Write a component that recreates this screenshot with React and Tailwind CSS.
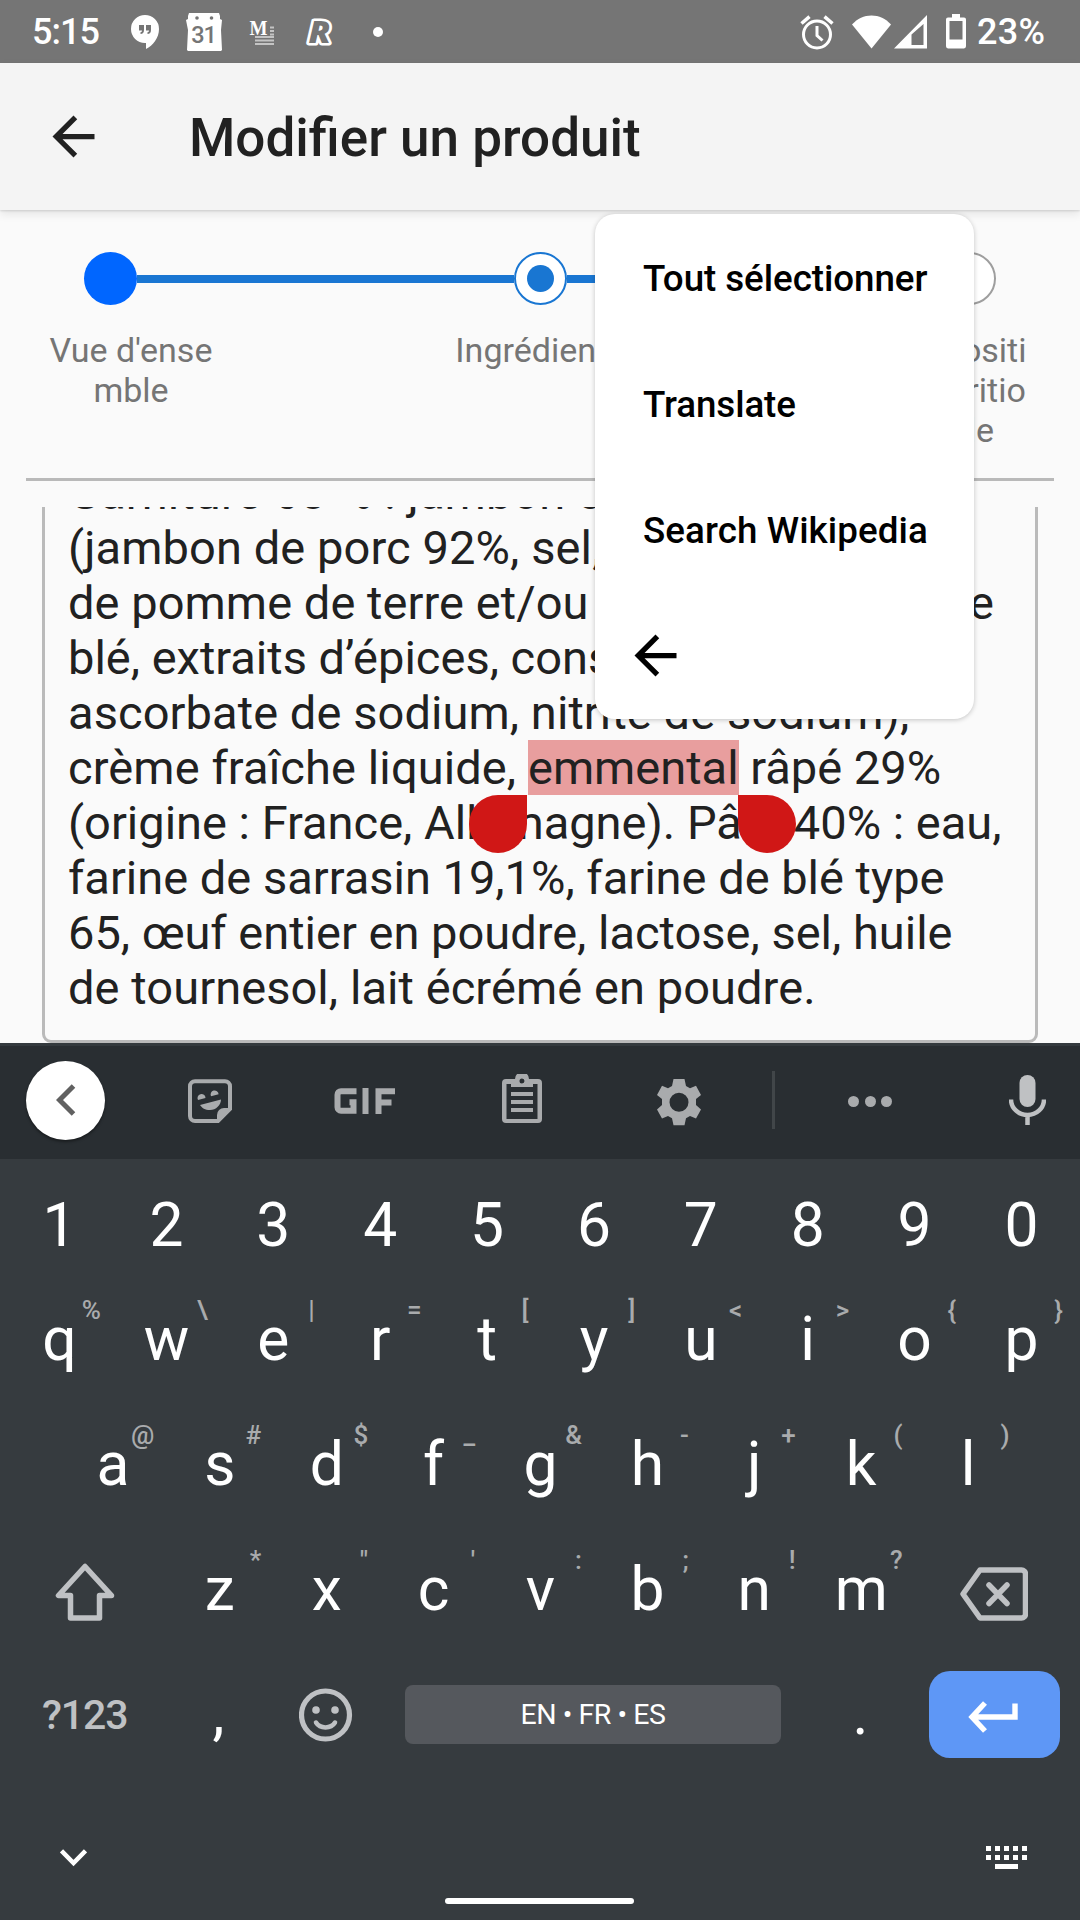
const roboto = "font-['Roboto','Noto_Sans',sans-serif]";

function BackArrow({ className }) {
  return (
    <svg viewBox="0 0 24 24" className={className} fill="currentColor">
      <path d="M20 11H7.83l5.59-5.59L12 4l-8 8 8 8 1.41-1.41L7.83 13H20v-2z" />
    </svg>
  );
}

function StatusBar() {
  return (
    <header className="flex h-[63px] items-center bg-[#757575] text-white">
      <span className="ml-[32px] w-[99px] text-[36px] font-medium tracking-[-1px] leading-[64px]">5:15</span>
      <svg className="h-[36px] w-[28px]" viewBox="0 0 28 36">
        <path fill="#fff" d="M14 1a14 14 0 0 0 0 28h1v6c7-3.500 13-11 13-20A14 14 0 0 0 14 1z" />
        <path fill="#757575" d="M8 11h5v5c0 2.500-1.200 4-3.500 4v-1.800c1 0 1.500-.8 1.500-1.700H8zM15 11h5v5c0 2.500-1.200 4-3.500 4v-1.800c1 0 1.500-.8 1.500-1.700h-3z" />
      </svg>
      <svg className="ml-[27px] h-[38px] w-[36px] overflow-visible" viewBox="0 0 36 38">
        <path fill="#fff" d="M3 0h30l1 3v3l2 1-1 10 1 20-1 1H2l-1-1 1-20L0 7l2-1V3z" />
        <circle cx="11" cy="5" r="1.800" fill="#757575" />
        <circle cx="25.500" cy="5" r="1.800" fill="#757575" />
        <text x="17.500" y="30" textAnchor="middle" fontFamily="Roboto" fontWeight="500" fontSize="23.500" fill="#757575" letterSpacing="-1">31</text>
      </svg>
      <svg className="ml-[28px] h-[26px] w-[25px] overflow-visible" viewBox="0 0 25 26">
        <text x="-0.500" y="15.500" fontFamily="Liberation Serif" fontWeight="700" fontSize="22" textLength="18" lengthAdjust="spacingAndGlyphs" fill="#fff">M</text>
        <path stroke="#c4c4c4" strokeWidth="2" d="M20 8.500h4M20 12h4M20 15.500h4M5 18h19M5 21.500h19M5 25h19" />
      </svg>
      <svg className="ml-[30px] h-[34px] w-[30px] overflow-visible" viewBox="0 0 30 34">
        <text x="3.500" y="28" fontFamily="Open Sans" fontWeight="800" fontStyle="italic" fontSize="30" textLength="22" lengthAdjust="spacingAndGlyphs" fill="#757575" stroke="#fff" strokeWidth="5" strokeLinejoin="round" paintOrder="stroke">R</text>
      </svg>
      <span className="ml-[38px] size-[10px] rounded-full bg-white" />
      <div className="ml-auto mr-[32px] flex items-center">
        <svg className="h-[36px] w-[34px]" viewBox="0 0 34 36" fill="none" stroke="#fff">
          <circle cx="17" cy="20.500" r="13.500" strokeWidth="3" />
          <path d="M17 12v9.500l5.500 5" strokeWidth="3" />
          <path d="M1.500 9.500l8-6.800M32.500 9.500l-8-6.800" strokeWidth="3.500" />
        </svg>
        <svg className="ml-[18px] h-[34px] w-[39px]" viewBox="0 0 39 34">
          <path fill="#fff" d="M0 9.500C5.500 3.500 12 .5 19.500.5S33.500 3.500 39 9.500L19.500 33.500z" />
        </svg>
        <svg className="ml-[3px] h-[34px] w-[33px]" viewBox="0 0 33 34">
          <path fill="#fff" fillRule="evenodd" d="M33 0v33.500H0zM29.500 9L17.500 19.500V30h12z" />
        </svg>
        <svg className="ml-[19px] h-[35px] w-[20px]" viewBox="0 0 20 35">
          <path fill="#fff" fillRule="evenodd" d="M6 0h8v3.500h4a2 2 0 0 1 2 2V32a2.500 2.500 0 0 1-2 2.500H2A2.500 2.500 0 0 1 0 32V5.500a2 2 0 0 1 2-2h4zM3.500 7v18.500h13V7z" />
        </svg>
        <span className="ml-[11px] w-[71px] text-[36px] font-medium tracking-[0.3px] leading-[64px]">23%</span>
      </div>
    </header>
  );
}

function AppBar() {
  return (
    <div className="relative z-10 flex h-[147px] items-center bg-[#f4f4f4] pl-[42px] shadow-[0_1px_2px_rgba(0,0,0,0.12),0_4px_9px_rgba(0,0,0,0.09)]">
      <BackArrow className="size-[63px] text-[#212121]" />
      <h1 className="ml-[84px] pt-[3px] text-[53px] font-medium leading-[62px] text-[#212121]">Modifier un produit</h1>
    </div>
  );
}

function Stepper() {
  return (
    <section className="h-[268px] pt-[42px]">
      <div className="flex items-center px-[84px]">
        <span className="size-[53px] rounded-full bg-[#0066ff]" />
        <span className="mt-px h-[8px] flex-1 bg-[#1976d2]" />
        <span className="flex size-[53px] items-center justify-center rounded-full border-2 border-[#1976d2] bg-white">
          <span className="size-[27px] rounded-full bg-[#1976d2]" />
        </span>
        <span className="mt-px h-[8px] flex-1 bg-[#1976d2]" />
        <span className="size-[53px] rounded-full border-2 border-[#9e9e9e] bg-white" />
      </div>
      <div className="mt-[25px] flex justify-between px-[41px] text-center text-[34px] leading-[40px] text-[#757575]">
        <p className="w-[180px]">Vue d'ense<br />mble</p>
        <p className="w-[180px]">Ingrédients</p>
        <p className="w-[180px]">Compositi<br />on nutritio<br />nnelle</p>
      </div>
    </section>
  );
}

function IngredientsField() {
  return (
    <section className="h-[536px] overflow-hidden px-[42px]">
      <div className="-mt-[60px] h-[596px] rounded-[9px] border-[3px] border-[#bababa] pl-[23px] pt-[15px] text-[47px] leading-[55px] whitespace-nowrap text-[#212121]">
        <p className="tracking-[0.1px]">Garniture 60 % : jambon cuit</p>
        <p className="tracking-[0.1px]">(jambon de porc 92%, sel,</p>
        <p className="flex w-[926px] justify-between"><span className="tracking-[0.06px]">de pomme de terre et/ou</span><span>de</span></p>
        <p>blé, extraits d’épices, conservateurs :</p>
        <p className="tracking-[0.08px]">ascorbate de sodium, nitrite de sodium),</p>
        <p>
          <span className="tracking-[0.1px]">crème fraîche liquide, </span>
          <span className="relative inline-block h-[55px] bg-[#e89e9e] align-top">
            emmental
            <span className="absolute right-full top-full mr-[1px] size-[58px] rounded-full rounded-tr-none bg-[#d01716]" />
            <span className="absolute left-full top-full -ml-[1px] size-[58px] rounded-full rounded-tl-none bg-[#d01716]" />
          </span>{" "}
          râpé 29%
        </p>
        <p>(origine : France, Allemagne). Pâte 40% : eau,</p>
        <p>farine de sarrasin 19,1%, farine de blé type</p>
        <p>65, œuf entier en poudre, lactose, sel, huile</p>
        <p className="tracking-[0.07px]">de tournesol, lait écrémé en poudre.</p>
      </div>
    </section>
  );
}

function SelectionMenu() {
  return (
    <div className="absolute left-[595px] top-[214px] z-20 h-[505px] w-[379px] rounded-[20px] bg-white text-[36.75px] font-medium text-black shadow-[0_1px_5px_rgba(0,0,0,0.22)]">
      <p className="flex h-[126px] items-center pl-[48px] pt-[3px] tracking-[-0.06px]">Tout sélectionner</p>
      <p className="flex h-[126px] items-center pl-[48px] pt-[3px] tracking-[-0.1px]">Translate</p>
      <p className="flex h-[126px] items-center pl-[48px] pt-[3px] tracking-[0.08px]">Search Wikipedia</p>
      <div className="flex h-[126px] items-center pl-[29px]">
        <BackArrow className="size-[63px]" />
      </div>
    </div>
  );
}

function Toolbar() {
  return (
    <div className="flex h-[116px] items-center border-t-[3px] border-[#343a3e] bg-[#292e32] text-[#a9abad]">
      <span className="mb-[5px] ml-[26px] flex size-[79px] items-center justify-center rounded-full bg-white shadow-[0_2px_3px_rgba(0,0,0,0.4)]">
        <svg className="h-[32px] w-[20px]" viewBox="0 0 20 32" fill="none" stroke="#616161" strokeWidth="5"><path d="M17.500 2L3.500 16l14 14" /></svg>
      </span>
      <svg className="mb-[4px] ml-[83px] size-[44px]" viewBox="0 0 44 44" fill="none">
        <path d="M7 2.200h30a5 5 0 0 1 5 5V30L30 42H7a5 5 0 0 1-5-5V7.200a5 5 0 0 1 5-5z" stroke="currentColor" strokeWidth="4" />
        <path d="M43.500 29L29 43.500V36a7 7 0 0 1 7-7z" fill="currentColor" />
        <path d="M12 26l21-5.500C33 26 28 31 22 31c-5 0-8-2-10-5zM10 21a4 4 0 1 1 7.500-2zM23 17.200a4 4 0 1 1 7.600-2z" fill="currentColor" />
      </svg>
      <svg className="mb-[3px] ml-[102px] h-[26px] w-[62px]" viewBox="0 0 62 26" fill="none" stroke="currentColor" strokeWidth="6">
        <path d="M22.500 3.200H7a3.500 3.500 0 0 0-3.500 3.500v12.500A3.500 3.500 0 0 0 7 22.700h12.500v-8.500h-4M31.500 0v26M44.500 26V3.200H61M44.500 14.500h13" />
      </svg>
      <svg className="mb-[7px] ml-[106px] h-[50px] w-[40px]" viewBox="0 0 40 50">
        <path fill="currentColor" fillRule="evenodd" d="M4 5h9a7 7 0 0 1 14 0h9a4 4 0 0 1 4 4v36a4 4 0 0 1-4 4H4a4 4 0 0 1-4-4V9a4 4 0 0 1 4-4zm.5 5v35h31V10H31v3H9v-3zM20 4.500a2.500 2.500 0 1 0 0 5 2.500 2.500 0 0 0 0-5zM9 18h22v4H9zm0 8h22v4H9zm0 8h22v4H9z" />
      </svg>
      <svg className="ml-[115px] h-[47px] w-[44px]" viewBox="0 0 44 47">
        <path fill="currentColor" fillRule="evenodd" d="M16.500 0h11l1.500 7 4 2.300 6-2.500L44 16l-5 4v6l5 4.500-5 9-6-2.500-4 2.300-1.500 7h-11l-1.500-7-4-2.300-6 2.500-5-9 5-4.500v-6L0 16l5-9.200L11 9.300 15 7zM22 13.700a9.500 9.500 0 1 0 0 19 9.500 9.500 0 0 0 0-19z" />
      </svg>
      <span className="mb-[5px] ml-[71px] h-[58px] w-[3px] bg-[#414649]" />
      <span className="mb-[3px] ml-[73px] flex gap-[5.500px]">
        <i className="size-[11px] rounded-full bg-[#a9abad]" />
        <i className="size-[11px] rounded-full bg-[#a9abad]" />
        <i className="size-[11px] rounded-full bg-[#a9abad]" />
      </span>
      <svg className="mb-[5px] ml-[117px] h-[50px] w-[37px]" viewBox="0 0 37 50" fill="none">
        <rect x="10.500" width="16" height="32" rx="8" fill="#bfc1c3" />
        <path d="M2 24.500a16.500 15.500 0 0 0 33 0M18.500 40v10" stroke="#bfc1c3" strokeWidth="4.500" />
      </svg>
    </div>
  );
}

function Key({ label, hint }) {
  return (
    <div className="relative flex w-[106.9px] items-center justify-center pl-px pt-[2px]">
      {label}
      {hint && <span className="absolute right-[11.500px] top-[18px] text-[26px] font-medium leading-[30px] text-[#a9abad]">{hint}</span>}
    </div>
  );
}

function KeyRow({ keys, hints }) {
  return keys.split("").map((k, i) => <Key key={k} label={k} hint={hints[i]} />);
}

function Keyboard() {
  return (
    <section className="flex h-[877px] flex-col bg-[#363b3f] text-[60.5px] leading-none text-white">
      <Toolbar />
      <div className="flex h-[118px] justify-center pt-[15px]"><KeyRow keys="1234567890" hints="" /></div>
      <div className="flex h-[125px] justify-center"><KeyRow keys="qwertyuiop" hints="%\|=[]<>{}" /></div>
      <div className="flex h-[125px] justify-center"><KeyRow keys="asdfghjkl" hints="@#$_&-+()" /></div>
      <div className="flex h-[125px] justify-center">
        <div className="flex w-[165px] items-center pl-[54px]">
          <svg className="mt-[4px] h-[60px] w-[60px]" viewBox="0 0 60 60" fill="none" stroke="#bfc1c4" strokeWidth="5.500" strokeLinejoin="round">
            <path d="M30 4.500L3.500 33.500h12V56h29V33.500h12z" />
          </svg>
        </div>
        <KeyRow keys="zxcvbnm" hints={`*"':;!?`} />
        <div className="flex w-[165px] items-center pl-[46px]">
          <svg className="mt-[9px] h-[54px] w-[68px]" viewBox="0 0 68 54" fill="none" stroke="#bfc1c4" strokeWidth="5.500" strokeLinejoin="round" strokeLinecap="round">
            <path d="M20 3h41.500a4 4 0 0 1 4 4v40a4 4 0 0 1-4 4H20L3 27z" />
            <path d="M29 18l18 18.500M47 18L29 36.500" />
          </svg>
        </div>
      </div>
      <div className="flex h-[125px] items-center">
        <span className="w-[165px] pl-[42px] pt-[2px] text-[41px] font-medium tracking-[-1.100px] text-[#bfc1c4]">?123</span>
        <span className="w-[107px] text-center">,</span>
        <svg className="ml-[27px] size-[54px]" viewBox="0 0 54 54" fill="none" stroke="#bfc1c4" strokeWidth="5.200">
          <circle cx="26.500" cy="27" r="24" />
          <path d="M17 34.500c4 6.500 15 6.500 19 0" strokeWidth="4.500" strokeLinecap="round" />
          <circle cx="17" cy="22" r="3.800" fill="#bfc1c4" stroke="none" />
          <circle cx="36" cy="22" r="3.800" fill="#bfc1c4" stroke="none" />
        </svg>
        <span className="ml-[52px] flex h-[59px] w-[376px] items-center justify-center rounded-[8px] bg-[#55585d] pt-[2px] text-[28.500px] tracking-[-0.450px]">EN • FR • ES</span>
        <span className="ml-[26px] w-[107px] text-center">.</span>
        <span className="ml-[15px] flex h-[87px] w-[131px] items-center justify-center rounded-[21px] bg-[#5e97f6] pr-[3px]">
          <svg className="mt-[5px] h-[32px] w-[50px]" viewBox="0 0 50 32" fill="none" stroke="#fff" strokeWidth="5.400">
            <path d="M17 2L4 16l13 14M4 16h43V2.500" />
          </svg>
        </span>
      </div>
      <div className="flex flex-1 items-start justify-between pl-[60px] pr-[53px] pt-[69px]">
        <svg className="mt-[3px] h-[18px] w-[27px]" viewBox="0 0 27 18" fill="none" stroke="#fff" strokeWidth="4.500"><path d="M1.500 1.800L13.500 14l12-12.200" /></svg>
        <span className="ml-[6px] mt-[52px] h-[6px] w-[189px] rounded-full bg-white" />
        <svg className="h-[24px] w-[41px]" viewBox="0 0 41 24" fill="#fff">
          <path d="M0 0h5v5H0zM9 0h5v5H9zM18 0h5v5h-5zM27 0h5v5h-5zM36 0h5v5h-5zM0 9h5v5H0zM9 9h5v5H9zM18 9h5v5h-5zM27 9h5v5h-5zM36 9h5v5h-5zM9 18h23v5H9z" />
        </svg>
      </div>
    </section>
  );
}

export default function App() {
  return (
    <main className={`relative h-[1920px] w-[1080px] overflow-hidden bg-[#fafafa] ${roboto}`}>
      <StatusBar />
      <AppBar />
      <Stepper />
      <div className="mx-[26px] mb-[26px] h-[3px] bg-[#b9b9b9]" />
      <IngredientsField />
      <SelectionMenu />
      <Keyboard />
    </main>
  );
}
